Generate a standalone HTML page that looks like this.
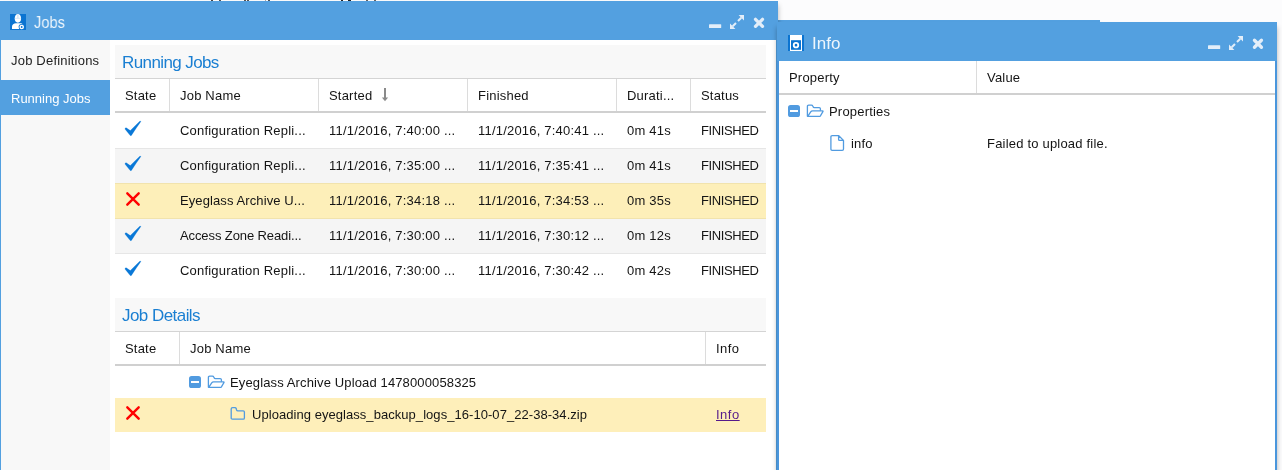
<!DOCTYPE html>
<html><head><meta charset="utf-8">
<style>
html,body{margin:0;padding:0;}
body{width:1282px;height:470px;overflow:hidden;position:relative;background:#fcfcfd;font-family:"Liberation Sans",sans-serif;color:#141414;}
.a{position:absolute;}
.t{position:absolute;white-space:nowrap;font-size:13px;line-height:16px;letter-spacing:0.2px;}
.e{letter-spacing:1.2px;}
.t{will-change:transform;}
.bar{background:#53a0e0;}
.hl{position:absolute;height:1px;background:#dcdcdc;}
.vl{position:absolute;width:1px;background:#dcdcdc;}
</style></head><body>

<div class="a bar" style="left:760px;top:20px;width:340px;height:10px;box-shadow:0 5px 5px rgba(0,0,0,.3);"></div>
<!-- ============ JOBS WINDOW ============ -->
<div class="a" style="left:211px;top:0;width:2px;height:1px;background:#444;"></div><div class="a" style="left:219px;top:0;width:2px;height:1px;background:#555;"></div><div class="a" style="left:244px;top:0;width:2px;height:1px;background:#555;"></div><div class="a" style="left:247px;top:0;width:2px;height:1px;background:#555;"></div><div class="a" style="left:265px;top:0;width:1px;height:1px;background:#aaa;"></div><div class="a" style="left:268px;top:0;width:2px;height:1px;background:#555;"></div><div class="a" style="left:341px;top:0;width:2px;height:1px;background:#222;"></div><div class="a" style="left:348px;top:0;width:3px;height:1px;background:#222;"></div><div class="a" style="left:366px;top:0;width:2px;height:1px;background:#666;"></div><div class="a" style="left:374px;top:0;width:2px;height:1px;background:#666;"></div>
<div class="a" style="left:0;top:1px;width:778px;height:469px;background:#fff;box-shadow:0 4px 5px rgba(0,0,0,.3);"></div>
<div class="a bar" style="left:0;top:1px;width:778px;height:39px;"></div>
<div class="a" style="left:0;top:40px;width:1px;height:430px;background:#53a0e0;"></div>
<div class="a" style="left:776px;top:40px;width:1px;height:430px;background:#53a0e0;"></div>

<!-- sidebar -->
<div class="a" style="left:1px;top:40px;width:109px;height:430px;background:#f8f8f8;"></div>
<div class="a" style="left:1px;top:80px;width:109px;height:35px;background:#53a0e0;"></div>
<div class="t" style="left:11px;top:53px;color:#222;">Job Definitions</div>
<div class="t" style="left:11px;top:91px;color:#fff;letter-spacing:0;">Running Jobs</div>

<!-- running jobs panel -->
<div class="a" style="left:115px;top:45px;width:651px;height:33px;background:#f8f8f8;"></div>
<div class="t" style="left:122px;top:53px;font-size:17px;line-height:20px;color:#1a7fd2;letter-spacing:-0.6px;">Running Jobs</div>
<div class="hl" style="left:115px;top:78px;width:651px;background:#d4d4d4;"></div>
<div class="a" style="left:115px;top:111px;width:651px;height:2px;background:#d0d0d0;"></div>
<div class="vl" style="left:169px;top:79px;height:32px;"></div>
<div class="vl" style="left:318px;top:79px;height:32px;"></div>
<div class="vl" style="left:467px;top:79px;height:32px;"></div>
<div class="vl" style="left:616px;top:79px;height:32px;"></div>
<div class="vl" style="left:690px;top:79px;height:32px;"></div>
<div class="t" style="left:125px;top:88px;">State</div>
<div class="t" style="left:180px;top:88px;">Job Name</div>
<div class="t" style="left:329px;top:88px;">Started</div>
<div class="t" style="left:478px;top:88px;">Finished</div>
<div class="t" style="left:627px;top:88px;">Durati...</div>
<div class="t" style="left:701px;top:88px;">Status</div>

<!-- rows -->
<div class="a" style="left:115px;top:148px;width:651px;height:1px;background:#e6e6e6;"></div>
<div class="a" style="left:115px;top:149px;width:651px;height:34px;background:#f5f5f5;"></div>
<div class="a" style="left:115px;top:183px;width:651px;height:36px;background:#fdefb9;"></div>
<div class="a" style="left:115px;top:183px;width:651px;height:1px;background:#f1e3ad;"></div>
<div class="a" style="left:115px;top:218px;width:651px;height:1px;background:#f1e3ad;"></div>
<div class="a" style="left:115px;top:219px;width:651px;height:34px;background:#f5f5f5;"></div>
<div class="a" style="left:115px;top:253px;width:651px;height:1px;background:#e6e6e6;"></div>

<div class="t" style="left:180px;top:123px;">Configuration Repli...</div>
<div class="t" style="left:329px;top:123px;">11/1/2016, 7:40:00 ...</div>
<div class="t" style="left:478px;top:123px;">11/1/2016, 7:40:41 ...</div>
<div class="t" style="left:627px;top:123px;">0m 41s</div>
<div class="t" style="left:701px;top:123px;letter-spacing:-0.4px;">FINISHED</div>

<div class="t" style="left:180px;top:158px;">Configuration Repli...</div>
<div class="t" style="left:329px;top:158px;">11/1/2016, 7:35:00 ...</div>
<div class="t" style="left:478px;top:158px;">11/1/2016, 7:35:41 ...</div>
<div class="t" style="left:627px;top:158px;">0m 41s</div>
<div class="t" style="left:701px;top:158px;letter-spacing:-0.4px;">FINISHED</div>

<div class="t" style="left:180px;top:193px;letter-spacing:0.1px;">Eyeglass Archive U...</div>
<div class="t" style="left:329px;top:193px;">11/1/2016, 7:34:18 ...</div>
<div class="t" style="left:478px;top:193px;">11/1/2016, 7:34:53 ...</div>
<div class="t" style="left:627px;top:193px;">0m 35s</div>
<div class="t" style="left:701px;top:193px;letter-spacing:-0.4px;">FINISHED</div>

<div class="t" style="left:180px;top:228px;letter-spacing:-0.1px;">Access Zone Readi...</div>
<div class="t" style="left:329px;top:228px;">11/1/2016, 7:30:00 ...</div>
<div class="t" style="left:478px;top:228px;">11/1/2016, 7:30:12 ...</div>
<div class="t" style="left:627px;top:228px;">0m 12s</div>
<div class="t" style="left:701px;top:228px;letter-spacing:-0.4px;">FINISHED</div>

<div class="t" style="left:180px;top:263px;">Configuration Repli...</div>
<div class="t" style="left:329px;top:263px;">11/1/2016, 7:30:00 ...</div>
<div class="t" style="left:478px;top:263px;">11/1/2016, 7:30:42 ...</div>
<div class="t" style="left:627px;top:263px;">0m 42s</div>
<div class="t" style="left:701px;top:263px;letter-spacing:-0.4px;">FINISHED</div>

<!-- job details panel -->
<div class="a" style="left:115px;top:298px;width:651px;height:33px;background:#f8f8f8;"></div>
<div class="t" style="left:122px;top:306px;font-size:17px;line-height:20px;color:#1a7fd2;letter-spacing:-0.55px;">Job Details</div>
<div class="hl" style="left:115px;top:331px;width:651px;background:#d4d4d4;"></div>
<div class="a" style="left:115px;top:364px;width:651px;height:2px;background:#d0d0d0;"></div>
<div class="vl" style="left:179px;top:332px;height:32px;"></div>
<div class="vl" style="left:705px;top:332px;height:32px;"></div>
<div class="t" style="left:125px;top:341px;">State</div>
<div class="t" style="left:190px;top:341px;">Job Name</div>
<div class="t" style="left:716px;top:341px;letter-spacing:0.45px;">Info</div>
<div class="a" style="left:115px;top:398px;width:651px;height:34px;background:#feefba;"></div>
<div class="t" style="left:230px;top:375px;letter-spacing:0.13px;">Eyeglass Archive Upload 1478000058325</div>
<div class="t" style="left:252px;top:407px;letter-spacing:0.05px;">Uploading eyeglass_backup_logs_16-10-07_22-38-34.zip</div>
<div class="t" style="left:716px;top:407px;color:#551a8b;text-decoration:underline;letter-spacing:0.5px;">Info</div>


<!-- ICONS -->
<svg class="a" style="left:10px;top:14px;" width="16" height="16" viewBox="0 0 16 16">
<rect width="16" height="16" fill="#0b74d1"/>
<path d="M4.7,4.6 C4.7,1.7 6,0 7.9,0 C9.8,0 11.1,1.7 11.1,4.6 C11.1,7.2 9.8,8.7 7.9,8.7 C6,8.7 4.7,7.2 4.7,4.6 Z" fill="#fff"/>
<path d="M4.9,4.3 H10.9" stroke="#bcd8f3" stroke-width="0.6"/>
<path d="M7.9,0.6 V4.2" stroke="#bcd8f3" stroke-width="0.9"/>
<path d="M2,14.9 V12.6 C2,10.6 3.8,9.3 6,9.3 H9.8 C11.4,9.3 12.4,9.8 13,10.5 V14.9 Z" fill="#fff"/>
<circle cx="11.7" cy="13" r="3.1" fill="#0b74d1"/>
<circle cx="11.7" cy="13" r="2.3" fill="#fff"/>
<circle cx="11.7" cy="13" r="0.9" fill="#0b74d1"/>
</svg>
<div class="t" style="left:34px;top:13px;font-size:17px;line-height:20px;color:rgba(255,255,255,0.9);letter-spacing:0;transform:scaleX(0.86);transform-origin:0 0;">Jobs</div>

<!-- jobs window controls -->
<svg class="a" style="left:700px;top:10px;" width="75" height="25" viewBox="700 10 75 25">
<rect x="709" y="24.2" width="12.2" height="3.8" rx="0.6" fill="#e3eef9"/>
<path d="M738.6,15 H744 V20.4 Z M730,29 V23.6 L735.4,29 Z" fill="#e3eef9"/>
<path d="M741.3,17.7 L738,21 M736,23 L732.7,26.3" stroke="#e3eef9" stroke-width="2"/>
<path d="M755.5,19.3 L762.5,26.3 M762.5,19.3 L755.5,26.3" stroke="#e3eef9" stroke-width="3.3" stroke-linecap="round"/>
</svg>

<!-- sort arrow -->
<svg class="a" style="left:380px;top:86px;" width="10" height="16" viewBox="380 86 10 16">
<rect x="384" y="88" width="2" height="10.5" fill="#8a8a8a"/>
<path d="M381.9,97.6 H388.1 L385,101.2 Z" fill="#8a8a8a"/>
</svg>
<svg class="a" style="left:122px;top:118px;" width="22" height="22" viewBox="0 0 22 22"><path d="M3.0,10.5 Q3.3,9.5 4.3,9.8 L8.3,12.6 L18.0,3.0 Q18.9,2.8 18.8,3.7 Q14.6,9.4 9.8,16.9 Q9.0,18.2 8.2,17.6 L3.1,11.3 Z" fill="#0a78d7" stroke="#0a78d7" stroke-width="0.2" stroke-linejoin="round"/></svg>
<svg class="a" style="left:122px;top:153px;" width="22" height="22" viewBox="0 0 22 22"><path d="M3.0,10.5 Q3.3,9.5 4.3,9.8 L8.3,12.6 L18.0,3.0 Q18.9,2.8 18.8,3.7 Q14.6,9.4 9.8,16.9 Q9.0,18.2 8.2,17.6 L3.1,11.3 Z" fill="#0a78d7" stroke="#0a78d7" stroke-width="0.2" stroke-linejoin="round"/></svg>
<svg class="a" style="left:122px;top:223px;" width="22" height="22" viewBox="0 0 22 22"><path d="M3.0,10.5 Q3.3,9.5 4.3,9.8 L8.3,12.6 L18.0,3.0 Q18.9,2.8 18.8,3.7 Q14.6,9.4 9.8,16.9 Q9.0,18.2 8.2,17.6 L3.1,11.3 Z" fill="#0a78d7" stroke="#0a78d7" stroke-width="0.2" stroke-linejoin="round"/></svg>
<svg class="a" style="left:122px;top:258px;" width="22" height="22" viewBox="0 0 22 22"><path d="M3.0,10.5 Q3.3,9.5 4.3,9.8 L8.3,12.6 L18.0,3.0 Q18.9,2.8 18.8,3.7 Q14.6,9.4 9.8,16.9 Q9.0,18.2 8.2,17.6 L3.1,11.3 Z" fill="#0a78d7" stroke="#0a78d7" stroke-width="0.2" stroke-linejoin="round"/></svg>
<svg class="a" style="left:122px;top:188px;" width="22" height="22" viewBox="0 0 22 22"><path d="M5.3,5.3 L16.7,16.7 M16.7,5.3 L5.3,16.7" stroke="#ff0000" stroke-width="2.4" stroke-linecap="round"/></svg>
<svg class="a" style="left:122px;top:402px;" width="22" height="22" viewBox="0 0 22 22"><path d="M5.3,5.3 L16.7,16.7 M16.7,5.3 L5.3,16.7" stroke="#ff0000" stroke-width="2.4" stroke-linecap="round"/></svg>

<!-- ============ INFO WINDOW ============ -->
<div class="a" style="left:777px;top:22px;width:500px;height:448px;background:#fff;box-shadow:0 5px 5px rgba(0,0,0,.3);"></div>
<div class="a bar" style="left:777px;top:22px;width:500px;height:39px;"></div>
<div class="a" style="left:777px;top:61px;width:2px;height:409px;background:#4a96dc;"></div>
<div class="a" style="left:1275px;top:61px;width:2px;height:409px;background:#4a96dc;"></div>
<div class="t" style="left:789px;top:70px;">Property</div>
<div class="t" style="left:987px;top:70px;">Value</div>
<div class="vl" style="left:976px;top:61px;height:32px;"></div>
<div class="a" style="left:779px;top:93px;width:496px;height:2px;background:#d0d0d0;"></div>
<div class="t" style="left:829px;top:104px;">Properties</div>
<div class="t" style="left:851px;top:136px;">info</div>
<div class="t" style="left:987px;top:136px;">Failed to upload file.</div>


<!-- info title -->
<svg class="a" style="left:788px;top:35px;" width="16" height="16" viewBox="0 0 16 16">
<rect width="16" height="16" fill="#0b74d1"/>
<rect x="2" y="0" width="12" height="16" fill="#fff"/>
<rect x="3" y="5.2" width="10" height="9.6" fill="#0b74d1"/>
<circle cx="8" cy="10.2" r="2.25" fill="none" stroke="#fff" stroke-width="1.8"/>
</svg>
<div class="t" style="left:812px;top:34px;font-size:17px;line-height:20px;color:rgba(255,255,255,0.9);letter-spacing:0;">Info</div>
<svg class="a" style="left:1200px;top:30px;" width="75" height="25" viewBox="1200 30 75 25">
<rect x="1208" y="45.2" width="12.2" height="3.8" rx="0.6" fill="#e3eef9"/>
<path d="M1237.6,36 H1243 V41.4 Z M1229,50 V44.6 L1234.4,50 Z" fill="#e3eef9"/>
<path d="M1240.3,38.7 L1237,42 M1235,44 L1231.7,47.3" stroke="#e3eef9" stroke-width="2"/>
<path d="M1254.45,40.25 L1261.45,47.25 M1261.45,40.25 L1254.45,47.25" stroke="#e3eef9" stroke-width="3.3" stroke-linecap="round"/>
</svg>
<svg class="a" style="left:188px;top:375px;" width="14" height="14" viewBox="0 0 14 14"><rect x="1" y="1" width="12" height="12" rx="2.6" fill="#519be0"/><rect x="3" y="6" width="8" height="2" fill="#fff"/></svg>
<svg class="a" style="left:206px;top:374px;" width="20" height="15" viewBox="-0.8 -0.8 20 15"><path d="M1.6,12.6 V2.6 Q1.6,1.3 2.9,1.3 H5.6 Q6.6,1.3 7,2.3 L7.3,3 Q7.6,3.8 8.5,3.8 H13.4 Q14.6,3.8 14.6,5 V6.9" fill="none" stroke="#519be0" stroke-width="1.3"/><path d="M1.9,12.6 L4.9,8.1 Q5.6,7 6.8,7 H16.7 Q17.6,7 17.1,7.9 L14.6,12 Q14.2,12.6 13.4,12.6 Z" fill="none" stroke="#519be0" stroke-width="1.3" stroke-linejoin="round"/></svg>
<svg class="a" style="left:230px;top:406px;" width="17" height="15" viewBox="0 0 17 15"><path d="M1.2,3 Q1.2,1.6 2.6,1.6 H5 Q5.9,1.6 6.2,2.5 L6.6,4 Q6.9,4.9 7.8,4.9 H13.2 Q14.4,4.9 14.4,6.1 V12 Q14.4,13.2 13.2,13.2 H2.4 Q1.2,13.2 1.2,12 Z" fill="none" stroke="#519be0" stroke-width="1.3"/></svg>
<svg class="a" style="left:787px;top:104px;" width="14" height="14" viewBox="0 0 14 14"><rect x="1" y="1" width="12" height="12" rx="2.6" fill="#519be0"/><rect x="3" y="6" width="8" height="2" fill="#fff"/></svg>
<svg class="a" style="left:805px;top:103px;" width="20" height="15" viewBox="-0.8 -0.8 20 15"><path d="M1.6,12.6 V2.6 Q1.6,1.3 2.9,1.3 H5.6 Q6.6,1.3 7,2.3 L7.3,3 Q7.6,3.8 8.5,3.8 H13.4 Q14.6,3.8 14.6,5 V6.9" fill="none" stroke="#519be0" stroke-width="1.3"/><path d="M1.9,12.6 L4.9,8.1 Q5.6,7 6.8,7 H16.7 Q17.6,7 17.1,7.9 L14.6,12 Q14.2,12.6 13.4,12.6 Z" fill="none" stroke="#519be0" stroke-width="1.3" stroke-linejoin="round"/></svg>
<svg class="a" style="left:829px;top:134px;" width="17" height="18" viewBox="0 0 17 18"><path d="M3.1,1.7 H9.8 L14.5,6.4 V15.1 Q14.5,16.3 13.3,16.3 H3.1 Q1.9,16.3 1.9,15.1 V2.9 Q1.9,1.7 3.1,1.7 Z M9.6,1.9 V5.4 Q9.6,6.4 10.6,6.4 H14.3" fill="none" stroke="#519be0" stroke-width="1.3" stroke-linejoin="round"/></svg>
</body></html>
